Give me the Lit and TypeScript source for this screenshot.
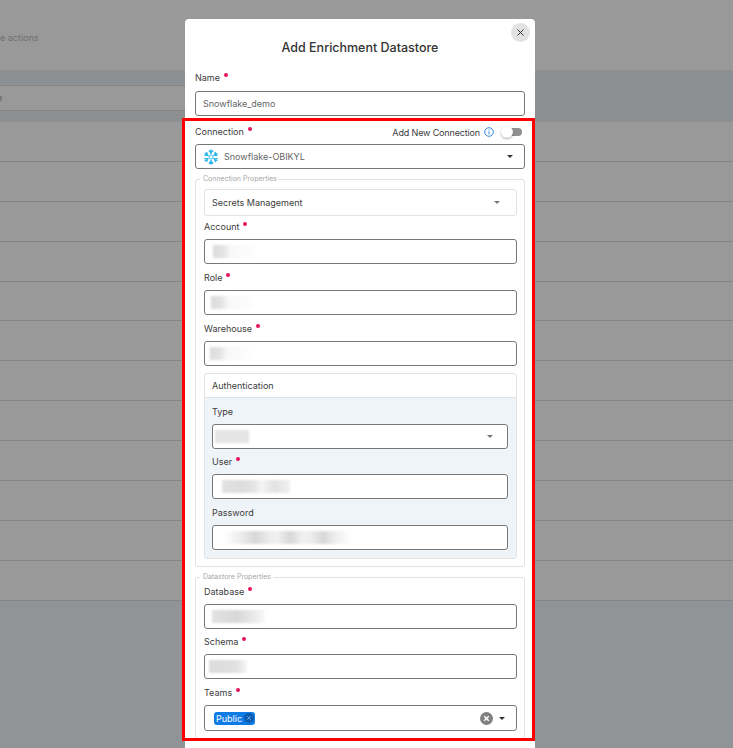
import {LitElement, html, css, svg} from 'lit'
import {customElement} from 'lit/decorators.js'

type Blur = {left: number, width: number, fill: string}
const SOLID = (c: string) => `linear-gradient(90deg, ${c}, ${c})`
const FADE = 'linear-gradient(90deg, #dcdcdc 0, #e4e4e4 25%, #f8f8f8 42%, #fdfdfd 100%)'
const USER = 'linear-gradient(90deg, #e2e2e2 0, #dcdcdc 30%, #e6e6e6 48%, #f4f4f4 58%, #e2e2e2 78%, #f2f2f2 100%)'
const PASS = 'linear-gradient(90deg, #fff 0, #eee 12%, #d8d8d8 25%, #eee 37%, #f0f0f0 42%, #d8d8d8 52%, #f0f0f0 62%, #eee 68%, #d8d8d8 78%, #eee 88%, #fff 100%)'

const rowCount = 12

@customElement('app-root')
export class AppRoot extends LitElement {
  static styles = css`
    :host {
      display: block;
      position: relative;
      width: 733px;
      height: 748px;
      overflow: hidden;
      background: #999;
      font-family: Inter, "Liberation Sans", sans-serif;
      font-size: 9px;
      color: #444;
    }
    .toolbar {
      height: 70px;
      box-sizing: border-box;
      padding-top: 32px;
      line-height: 12px;
      color: #6f6f6f;
      white-space: nowrap;
    }
    .band {
      height: 52px;
      box-sizing: border-box;
      padding-top: 15px;
      background: #8c9093;
    }
    .head-cell {
      width: 300px;
      height: 26px;
      box-sizing: border-box;
      border-top: 1px solid #858585;
      border-bottom: 1px solid #858585;
      background: #999;
      line-height: 24px;
      color: #5c5c5c;
      text-indent: -3px;
      overflow: hidden;
    }
    .row {
      height: 39.9px;
      box-sizing: border-box;
      border-bottom: 1px solid #858585;
    }
    .row:last-of-type { border-bottom: 0; }
    .rest {
      height: 147px;
      background: #909497;
    }

    .modal {
      position: absolute;
      left: 185px;
      top: 19px;
      width: 350px;
      height: 760px;
      box-sizing: border-box;
      padding: 0 10px;
      background: #fff;
      border-radius: 4px;
    }
    .title {
      margin: 0;
      padding-top: 20px;
      height: 52px;
      box-sizing: border-box;
      line-height: 17px;
      font-size: 12.5px;
      font-weight: 500;
      text-align: center;
      color: #333;
    }
    .close {
      position: absolute;
      right: 5px;
      top: 4px;
      width: 19px;
      height: 19px;
      border-radius: 50%;
      background: #e2e2e2;
      display: flex;
      align-items: center;
      justify-content: center;
    }
    .label {
      display: block;
      height: 14px;
      line-height: 14px;
      color: #3c3c3c;
      white-space: nowrap;
    }
    .req {
      display: inline-block;
      width: 4px;
      height: 4px;
      margin-left: 4px;
      border-radius: 50%;
      background: #e6135e;
      vertical-align: 4px;
    }
    .control {
      display: flex;
      align-items: center;
      height: 25px;
      box-sizing: border-box;
      margin-top: 5px;
      background: #fff;
      border: 1px solid #777;
      border-radius: 3px;
      color: #666;
      overflow: hidden;
    }
    .control.name { padding-left: 7px; margin-top: 6px; }
    .blur {
      height: 13px;
      flex: none;
      filter: blur(1.2px);
    }
    .connection-head {
      display: flex;
      align-items: center;
      justify-content: space-between;
      margin-top: 9px;
      height: 14px;
    }
    .connection-head .label { line-height: 14px; }
    .add-new {
      display: flex;
      align-items: center;
      color: #3c3c3c;
      letter-spacing: -0.15px;
      padding-right: 3px;
    }
    .info { margin-left: 4px; }
    .toggle {
      position: relative;
      width: 21px;
      height: 14px;
      margin-left: 7px;
    }
    .toggle .track {
      position: absolute;
      left: 3px;
      right: 0;
      top: 3px;
      height: 8px;
      border-radius: 4px;
      background: #8f8f8f;
    }
    .toggle .knob {
      position: absolute;
      left: 0;
      top: 1px;
      width: 12px;
      height: 12px;
      border-radius: 50%;
      background: #fff;
      box-shadow: 0 1px 2px rgba(0,0,0,.35);
    }
    .conn-select {
      padding: 0 11px 0 7px;
      gap: 5px;
      height: 25px;
      margin-top: 5px;
    }
    .grow { flex: 1; min-width: 0; }
    .caret {
      flex: none;
      width: 0;
      height: 0;
      border-left: 3.5px solid transparent;
      border-right: 3.5px solid transparent;
      border-top: 3.5px solid #333;
    }
    .caret.soft { border-top-color: #777; }

    fieldset {
      margin: 6px 0 0;
      padding: 6px 7px 7px 8px;
      border: 1px solid #e2e2e2;
      border-radius: 3px;
      min-width: 0;
    }
    fieldset.store {
      margin-top: 6px;
      padding-top: 4px;
    }
    legend {
      margin-left: -4px;
      padding: 0 2px 0 3px;
      height: 8px;
      line-height: 8px;
      font-size: 7px;
      color: #a6a6a6;
    }
    .secrets {
      display: flex;
      align-items: center;
      height: 27px;
      box-sizing: border-box;
      padding: 0 16px 0 7px;
      margin-bottom: 4px;
      border: 1px solid #e2e2e2;
      border-radius: 3px;
      color: #3c3c3c;
    }
    .field + .field { margin-top: 7px; }
    .auth {
      margin-top: 7px;
      border: 1px solid #e2e2e2;
      border-radius: 3px;
    }
    .auth-head {
      height: 23px;
      line-height: 23px;
      padding-left: 7px;
      color: #3c3c3c;
      border-bottom: 1px solid #dfe4e8;
    }
    .auth-body {
      padding: 7px 8px 8px 7px;
      background: #eff4f8;
    }
    .auth-body .field + .field,
    .store .field + .field { margin-top: 6px; }
    .auth-body .field:last-child,
    .store .field:last-child { margin-top: 7px; }
    .control.select { padding-right: 14px; }
    .control.teams {
      height: 26px;
      padding: 0 11px 0 9px;
    }
    .chip {
      display: flex;
      align-items: center;
      gap: 2px;
      height: 13px;
      padding: 0 1px 0 2px;
      border-radius: 3px;
      background: #0f7ce6;
      color: #fff;
    }
    .clear { margin-right: 6px; flex: none; }
    .frame {
      position: absolute;
      left: 182px;
      top: 118px;
      width: 353px;
      height: 623px;
      box-sizing: border-box;
      border: 3px solid #f00;
    }
  `

  private flake() {
    const arm = svg`<path d="M8 5.2V.6M5.9 1.6 8 3.7l2.1-2.1"/>`
    return html`<svg width="16" height="16" viewBox="0 0 16 16" fill="none" stroke="#29b5e8" stroke-width="1.4">
      ${[0, 60, 120, 180, 240, 300].map(a => svg`<g transform="rotate(${a} 8 8)">${arm}</g>`)}
      <path d="M8 5.9 9.8 7v2L8 10.1 6.2 9V7Z" stroke-width=".9"/>
    </svg>`
  }

  private field(name: string, required: boolean, blur: Blur, soft = false) {
    return html`<div class="field">
      <span class="label">${name}${required ? html`<span class="req"></span>` : ''}</span>
      <div class="control ${soft ? 'select' : ''}">
        <span class="blur" style="margin-left:${blur.left}px;width:${blur.width}px;background:${blur.fill}"></span>
        ${soft ? html`<span class="grow"></span><span class="caret soft"></span>` : ''}
      </div>
    </div>`
  }

  render() {
    return html`
      <div class="toolbar">e actions</div>
      <div class="band"><div class="head-cell">e</div></div>
      ${Array.from({length: rowCount}, () => html`<div class="row"></div>`)}
      <div class="rest"></div>

      <section class="modal">
        <h2 class="title">Add Enrichment Datastore</h2>
        <div class="close">
          <svg width="9" height="9" viewBox="0 0 9 9" stroke="#333" stroke-width="1"><path d="M1.5 1.5l6 6M7.5 1.5l-6 6"/></svg>
        </div>
        <span class="label">Name<span class="req"></span></span>
        <div class="control name">Snowflake_demo</div>

        <div class="connection-head">
          <span class="label">Connection<span class="req"></span></span>
          <div class="add-new">
            Add New Connection
            <svg class="info" width="10" height="10" viewBox="0 0 10 10" fill="none" stroke="#2f86e0">
              <circle cx="5" cy="5" r="4.3"/><path d="M5 4.4v3M5 2.4v1"/>
            </svg>
            <div class="toggle"><span class="track"></span><span class="knob"></span></div>
          </div>
        </div>
        <div class="control conn-select">
          ${this.flake()}
          <span class="grow">Snowflake-OBIKYL</span>
          <span class="caret"></span>
        </div>

        <fieldset>
          <legend>Connection Properties</legend>
          <div class="secrets"><span class="grow">Secrets Management</span><span class="caret soft"></span></div>
          ${this.field('Account', true, {left: 8, width: 42, fill: FADE})}
          ${this.field('Role', true, {left: 6, width: 42, fill: FADE})}
          ${this.field('Warehouse', true, {left: 5, width: 40, fill: FADE})}
          <div class="auth">
            <div class="auth-head">Authentication</div>
            <div class="auth-body">
              ${this.field('Type', false, {left: 2, width: 34, fill: SOLID('#e4e4e4')}, true)}
              ${this.field('User', true, {left: 9, width: 68, fill: USER})}
              ${this.field('Password', false, {left: 11, width: 127, fill: PASS})}
            </div>
          </div>
        </fieldset>

        <fieldset class="store">
          <legend>Datastore Properties</legend>
          ${this.field('Database', true, {left: 7, width: 52, fill: 'linear-gradient(90deg, #e2e2e2, #d8d8d8 50%, #f6f6f6)'})}
          ${this.field('Schema', true, {left: 4, width: 38, fill: 'linear-gradient(90deg, #dcdcdc, #e0e0e0 70%, #f6f6f6)'})}
          <div class="field">
            <span class="label">Teams<span class="req"></span></span>
            <div class="control teams">
              <span class="chip">Public
                <svg width="10" height="10" viewBox="0 0 10 10"><circle cx="5" cy="5" r="5" fill="#0a5cb0"/><path d="M3.2 3.2l3.6 3.6M6.8 3.2l-3.6 3.6" stroke="#5d9ee0" stroke-width="1"/></svg>
              </span>
              <span class="grow"></span>
              <svg class="clear" width="13" height="13" viewBox="0 0 13 13"><circle cx="6.5" cy="6.5" r="6.5" fill="#808080"/><path d="M4.2 4.2l4.6 4.6M8.8 4.2l-4.6 4.6" stroke="#fff" stroke-width="1.5"/></svg>
              <span class="caret"></span>
            </div>
          </div>
        </fieldset>
      </section>

      <div class="frame"></div>
    `
  }
}
